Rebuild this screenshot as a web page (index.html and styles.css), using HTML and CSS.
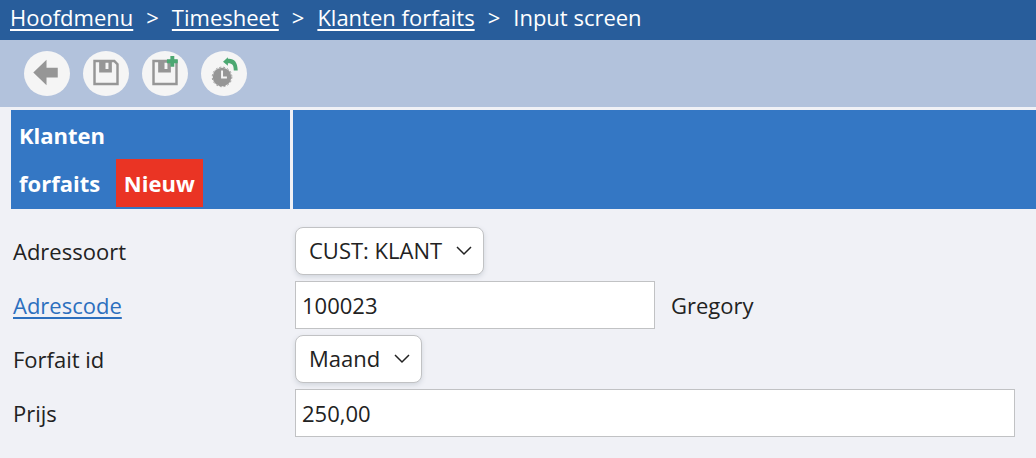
FILE: index.html
```html
<!DOCTYPE html>
<html lang="nl">
<head>
<meta charset="utf-8">
<meta name="viewport" content="width=device-width, initial-scale=1">
<title>Klanten forfaits</title>
<link rel="stylesheet" href="styles.css">
</head>
<body>
<nav class="breadcrumb">
  <a href="#">Hoofdmenu</a>
  <span>&gt;</span>
  <a href="#">Timesheet</a>
  <span>&gt;</span>
  <a href="#">Klanten forfaits</a>
  <span>&gt;</span>
  <span>Input screen</span>
</nav>
<div class="toolbar">
  <button type="button" class="tool" aria-label="Terug">
    <svg viewBox="0 0 46 46"><path class="gray" d="M9 22 22.500 9v8H34v10H22.500v8z"/></svg>
  </button>
  <button type="button" class="tool" aria-label="Opslaan">
    <svg viewBox="0 0 46 46"><path class="gray" fill-rule="evenodd" d="M10 9h22l4 4v22H10zM12.500 11.500v21h21V14l-2.500-2.500h-2V22H16V11.500zM22.500 12v6.500h3V12z"/></svg>
  </button>
  <button type="button" class="tool" aria-label="Opslaan en nieuw">
    <svg viewBox="0 0 46 46"><path class="gray" fill-rule="evenodd" d="M10 9h26v26H10zM12.500 11.500v21h21v-21h-4.500V22H16V11.500zM22.500 12v6.500h3V12z"/><path class="green" d="M28.500 5h4v3.500H36v4h-3.500V16h-4v-3.500H25v-4h3.500z"/></svg>
  </button>
  <button type="button" class="tool" aria-label="Historie">
    <svg viewBox="0 0 46 46"><circle class="gray" cx="21" cy="26.500" r="9.500"/><circle class="ring" cx="21" cy="26.500" r="10"/><path class="hands" d="M21 20v7h5"/><path class="green" d="m22 11 5-4.500V8c6-.5 10 3 10 12h-4c0-5-1-7.500-6-7.500V15z"/></svg>
  </button>
</div>
<main class="content">
  <header class="heading">
    <h1 class="title">Klanten<br>forfaits <span class="badge">Nieuw</span></h1>
    <div class="heading-fill"></div>
  </header>
  <form class="form">
    <div class="row">
      <label for="adressoort">Adressoort</label>
      <div class="field">
        <span class="picker">
          <select id="adressoort"><option>CUST: KLANT</option></select>
          <svg class="chevron" viewBox="0 0 16 10"><path d="m1 1 7 7 7-7"/></svg>
        </span>
      </div>
    </div>
    <div class="row">
      <label for="adrescode"><a href="#">Adrescode</a></label>
      <div class="field">
        <input class="short" id="adrescode" type="text" value="100023">
        <output for="adrescode">Gregory</output>
      </div>
    </div>
    <div class="row">
      <label for="forfait">Forfait id</label>
      <div class="field">
        <span class="picker">
          <select id="forfait"><option>Maand</option></select>
          <svg class="chevron" viewBox="0 0 16 10"><path d="m1 1 7 7 7-7"/></svg>
        </span>
      </div>
    </div>
    <div class="row">
      <label for="prijs">Prijs</label>
      <div class="field">
        <input class="long" id="prijs" type="text" value="250,00">
      </div>
    </div>
  </form>
</main>
</body>
</html>
```
FILE: styles.css
```css
* {
  box-sizing: border-box;
}

body {
  margin: 0;
  background: #f0f1f6;
  color: #222;
  font: 22px/30px "Open Sans", sans-serif;
}

.breadcrumb {
  display: flex;
  gap: 13px;
  padding: 2px 10px 8px;
  background: #285d9b;
  color: #fff;
}

a {
  color: #2c6fbe;
  text-decoration-thickness: 2px;
  text-underline-offset: 3px;
  text-decoration-skip-ink: none;
}

.breadcrumb a {
  color: inherit;
}

.toolbar {
  display: flex;
  gap: 13px;
  padding: 11px 24px 11px;
  background: #b2c2dc;
}

.tool {
  width: 46px;
  height: 45px;
  padding: 0;
  border: 0;
  border-radius: 50%;
  background: #f5f5f5;
}

.tool svg {
  display: block;
  width: 100%;
  height: 100%;
}

.gray {
  fill: #969696;
}

.green {
  fill: #4ca872;
}

.ring {
  fill: none;
  stroke: #969696;
  stroke-dasharray: 2 2;
}

.hands {
  fill: none;
  stroke: #f5f5f5;
  stroke-width: 2;
}

.content {
  padding: 3px 0 20px 11px;
}

.heading {
  display: grid;
  grid-template-columns: 279px 1fr;
  gap: 3px;
}

.title {
  margin: 0;
  padding: 1px 8px 2px;
  background: #3477c4;
  color: #fff;
  font-size: 22px;
  line-height: 48px;
}

.badge {
  display: inline-block;
  margin-left: 10px;
  padding: 0 8px;
  background: #ea3424;
}

.heading-fill {
  background: #3477c4;
}

.form {
  display: grid;
  gap: 6px;
  padding: 18px 21px 0 2px;
}

.row {
  display: grid;
  grid-template-columns: 282px 1fr;
  align-items: center;
}

.field {
  display: flex;
  align-items: center;
  gap: 16px;
}

input,
select {
  height: 48px;
  border: 1px solid #c1c2c4;
  background: #fff;
  color: inherit;
  font: inherit;
}

input {
  min-width: 0;
  padding: 0 6px;
  border-radius: 0;
}

.short {
  width: 50%;
}

.long {
  width: 100%;
}

.picker {
  display: inline-grid;
  align-items: center;
}

select {
  grid-area: 1 / 1;
  padding: 0 40px 2px 13px;
  border-radius: 8px;
  box-shadow: 0 2px 5px #d0d5dc;
  appearance: none;
}

.chevron {
  grid-area: 1 / 1;
  justify-self: end;
  width: 16px;
  height: 10px;
  margin-right: 12px;
  fill: none;
  stroke: #222;
  stroke-width: 1.5;
  pointer-events: none;
}
```
